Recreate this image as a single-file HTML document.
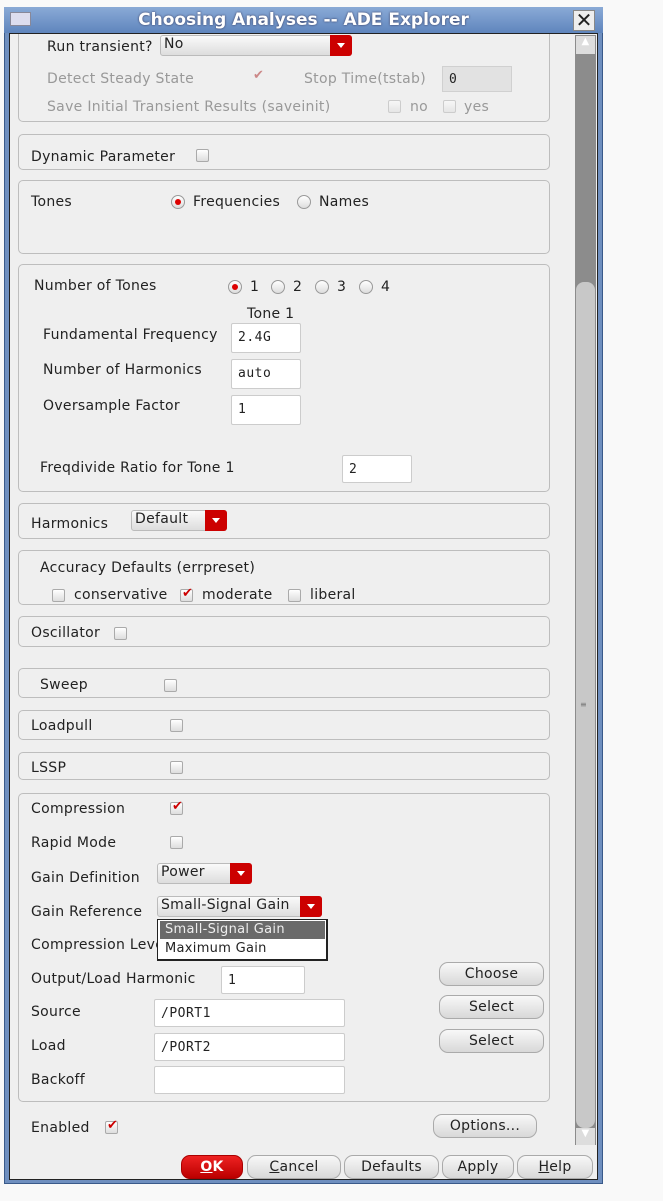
<!DOCTYPE html><html><head><meta charset="utf-8"><style>
*{box-sizing:border-box;margin:0;padding:0}
body{width:663px;height:1201px;background:#f9f9f9;position:relative;overflow:hidden;font-family:"DejaVu Sans","Liberation Sans",sans-serif;font-size:14px;letter-spacing:0.3px;color:#222}
.a{position:absolute;white-space:nowrap}
.win{position:absolute;left:4px;top:7px;width:599px;height:1177px;background:#6f8fbf;border:1px solid #3a5a8a}
.title{position:absolute;left:4px;top:7px;width:599px;height:26px;background:linear-gradient(#8aaad6,#5f85bd);color:#fff;font-weight:bold;font-size:17px;letter-spacing:0;text-align:center;line-height:26px;text-shadow:0 0 2px #335}
.body{position:absolute;left:9px;top:33px;width:589px;height:1147px;background:#efefef;border:1px solid #222}
.p{position:absolute;left:18px;width:532px;border:1px solid #bdbdbd;border-radius:5px}
.dis{color:#999}
.dd{position:absolute;height:21px;border:1px solid #bbb;border-radius:3px;background:linear-gradient(#fafafa,#ddd);padding-left:3px;line-height:17px}
.dd i{position:absolute;right:-1px;top:-1px;width:22px;height:21px;background:#c00;border-radius:0 3px 3px 0}
.dd i:after{content:"";position:absolute;left:7px;top:8px;border:4px solid transparent;border-top:5px solid #fff;border-bottom:0}
.cb{position:absolute;width:13px;height:13px;border:1px solid #aaa;border-radius:2px;background:linear-gradient(#fff,#ddd)}
.ck:after{content:"✔";position:absolute;left:1px;top:-4px;color:#c00;font-size:13px}
.rb{position:absolute;width:14px;height:14px;border:1px solid #999;border-radius:50%;background:linear-gradient(#fff,#ddd)}
.rb.on:after{content:"";position:absolute;left:3px;top:3px;width:6px;height:6px;border-radius:50%;background:#d00}
.in{position:absolute;background:#fff;border:1px solid #ccc;border-radius:2px;font-family:"DejaVu Sans Mono","Liberation Mono",monospace;font-size:13px;letter-spacing:0.5px;padding-left:6px;line-height:28px}
.bt{position:absolute;height:24px;border:1px solid #aaa;border-radius:9px;background:linear-gradient(#f8f8f8,#d8d8d8);text-align:center;line-height:22px;font-size:14px}
</style></head><body>
<div class="win"></div>
<div class="title">Choosing Analyses -- ADE Explorer</div>
<div class="a" style="left:10px;top:12px;width:21px;height:14px;background:#dde;border:1px solid #889"></div>
<div class="a" style="left:573px;top:10px;width:22px;height:21px;background:#eee;border:1px solid #888;font-size:20px;line-height:19px;text-align:center;letter-spacing:0">✕</div>
<div class="body"></div>
<div class="a" style="left:575px;top:35px;width:21px;height:1110px;background:#8c8c8c"></div>
<div class="a" style="left:576px;top:36px;width:19px;height:18px;background:#ddd;color:#fff;font-size:10px;text-align:center">▲</div>
<div class="a" style="left:576px;top:282px;width:19px;height:846px;background:#c8c8c8;border-radius:8px"></div>
<div class="a" style="left:580px;top:700px;font-size:8px;color:#777">≡</div>
<div class="a" style="left:576px;top:1128px;width:19px;height:17px;background:#ddd;color:#fff;font-size:10px;text-align:center">▼</div>

<div class="p" style="top:34px;height:88px;border-top:none;border-radius:0 0 5px 5px"></div>
<div class="a" style="left:47px;top:39px">Run transient?</div>
<div class="dd" style="left:160px;top:35px;width:192px">No<i></i></div>
<div class="a dis" style="left:47px;top:71px">Detect Steady State</div>
<div class="a" style="left:253px;top:68px;color:#c88;font-size:13px">✔</div>
<div class="a dis" style="left:304px;top:71px">Stop Time(tstab)</div>
<div class="a" style="left:442px;top:66px;width:70px;height:26px;background:#e2e2e2;border:1px solid #d0d0d0;font-family:'DejaVu Sans Mono',monospace;font-size:13px;padding:5px 6px">0</div>
<div class="a dis" style="left:47px;top:99px">Save Initial Transient Results (saveinit)</div>
<div class="cb" style="left:388px;top:100px;opacity:.5"></div><div class="a dis" style="left:410px;top:99px">no</div>
<div class="cb" style="left:443px;top:100px;opacity:.5"></div><div class="a dis" style="left:464px;top:99px">yes</div>

<div class="p" style="top:134px;height:36px"></div>
<div class="a" style="left:31px;top:149px">Dynamic Parameter</div><div class="cb" style="left:196px;top:149px"></div>

<div class="p" style="top:180px;height:74px"></div>
<div class="a" style="left:31px;top:194px">Tones</div>
<div class="rb on" style="left:171px;top:195px"></div><div class="a" style="left:193px;top:194px">Frequencies</div>
<div class="rb" style="left:297px;top:195px"></div><div class="a" style="left:319px;top:194px">Names</div>

<div class="p" style="top:264px;height:228px"></div>
<div class="a" style="left:34px;top:278px">Number of Tones</div>
<div class="rb on" style="left:228px;top:280px"></div><div class="a" style="left:250px;top:279px">1</div>
<div class="rb" style="left:271px;top:280px"></div><div class="a" style="left:293px;top:279px">2</div>
<div class="rb" style="left:315px;top:280px"></div><div class="a" style="left:337px;top:279px">3</div>
<div class="rb" style="left:359px;top:280px"></div><div class="a" style="left:381px;top:279px">4</div>
<div class="a" style="left:247px;top:306px">Tone 1</div>
<div class="a" style="left:43px;top:327px">Fundamental Frequency</div><div class="in" style="left:231px;top:323px;width:70px;height:30px">2.4G</div>
<div class="a" style="left:43px;top:362px">Number of Harmonics</div><div class="in" style="left:231px;top:359px;width:70px;height:30px">auto</div>
<div class="a" style="left:43px;top:398px">Oversample Factor</div><div class="in" style="left:231px;top:395px;width:70px;height:30px">1</div>
<div class="a" style="left:40px;top:460px">Freqdivide Ratio for Tone 1</div><div class="in" style="left:342px;top:455px;width:70px;height:28px">2</div>

<div class="p" style="top:503px;height:36px"></div>
<div class="a" style="left:31px;top:516px">Harmonics</div>
<div class="dd" style="left:131px;top:510px;width:96px">Default<i></i></div>

<div class="p" style="top:550px;height:55px"></div>
<div class="a" style="left:40px;top:560px">Accuracy Defaults (errpreset)</div>
<div class="cb" style="left:52px;top:589px"></div><div class="a" style="left:74px;top:587px">conservative</div>
<div class="cb ck" style="left:180px;top:589px"></div><div class="a" style="left:202px;top:587px">moderate</div>
<div class="cb" style="left:288px;top:589px"></div><div class="a" style="left:310px;top:587px">liberal</div>

<div class="p" style="top:616px;height:31px"></div>
<div class="a" style="left:31px;top:625px">Oscillator</div><div class="cb" style="left:114px;top:627px"></div>
<div class="p" style="top:668px;height:30px"></div>
<div class="a" style="left:40px;top:677px">Sweep</div><div class="cb" style="left:164px;top:679px"></div>
<div class="p" style="top:710px;height:30px"></div>
<div class="a" style="left:31px;top:718px">Loadpull</div><div class="cb" style="left:170px;top:719px"></div>
<div class="p" style="top:752px;height:28px"></div>
<div class="a" style="left:31px;top:760px">LSSP</div><div class="cb" style="left:170px;top:761px"></div>

<div class="p" style="top:793px;height:309px"></div>
<div class="a" style="left:31px;top:801px">Compression</div><div class="cb ck" style="left:170px;top:802px"></div>
<div class="a" style="left:31px;top:835px">Rapid Mode</div><div class="cb" style="left:170px;top:836px"></div>
<div class="a" style="left:31px;top:870px">Gain Definition</div>
<div class="dd" style="left:157px;top:863px;width:95px">Power<i></i></div>
<div class="a" style="left:31px;top:904px">Gain Reference</div>
<div class="dd" style="left:157px;top:896px;width:165px">Small-Signal Gain<i></i></div>
<div class="a" style="left:31px;top:937px">Compression Level</div>
<div class="a" style="left:157px;top:919px;width:171px;height:42px;background:#fff;border:1px solid #222;border-width:1px 2px 2px 1px"></div>
<div class="a" style="left:160px;top:921px;width:165px;height:18px;background:#6a6a6a;color:#eee;padding-left:5px;line-height:18px;font-size:13px">Small-Signal Gain</div>
<div class="a" style="left:165px;top:941px;font-size:13px">Maximum Gain</div>
<div class="a" style="left:31px;top:971px">Output/Load Harmonic</div><div class="in" style="left:221px;top:966px;width:84px;height:28px">1</div>
<div class="a" style="left:31px;top:1004px">Source</div><div class="in" style="left:154px;top:999px;width:191px;height:28px">/PORT1</div>
<div class="a" style="left:31px;top:1038px">Load</div><div class="in" style="left:154px;top:1033px;width:191px;height:28px">/PORT2</div>
<div class="a" style="left:31px;top:1072px">Backoff</div><div class="in" style="left:154px;top:1066px;width:191px;height:28px"></div>
<div class="bt" style="left:439px;top:962px;width:105px">Choose</div>
<div class="bt" style="left:439px;top:995px;width:105px">Select</div>
<div class="bt" style="left:439px;top:1029px;width:105px">Select</div>

<div class="a" style="left:31px;top:1120px">Enabled</div><div class="cb ck" style="left:105px;top:1121px"></div>
<div class="bt" style="left:433px;top:1114px;width:104px">Options...</div>

<div class="bt" style="left:181px;top:1155px;width:62px;background:linear-gradient(#e22,#b00);border-color:#a00;color:#fff;font-weight:bold"><u>O</u>K</div>
<div class="bt" style="left:247px;top:1155px;width:94px"><u>C</u>ancel</div>
<div class="bt" style="left:344px;top:1155px;width:95px">Defaults</div>
<div class="bt" style="left:442px;top:1155px;width:72px">Apply</div>
<div class="bt" style="left:517px;top:1155px;width:76px"><u>H</u>elp</div>
</body></html>
